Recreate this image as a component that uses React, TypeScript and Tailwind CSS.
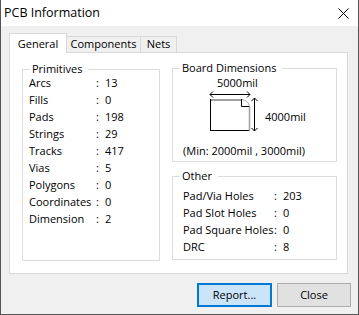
import React from "react";

const primitives: [string, string][] = [
  ["Arcs", "13"],
  ["Fills", "0"],
  ["Pads", "198"],
  ["Strings", "29"],
  ["Tracks", "417"],
  ["Vias", "5"],
  ["Polygons", "0"],
  ["Coordinates", "0"],
  ["Dimension", "2"],
];

const other: [string, string][] = [
  ["Pad/Via Holes", "203"],
  ["Pad Slot Holes", "0"],
  ["Pad Square Holes", "0"],
  ["DRC", "8"],
];

// Windows style group box with caption sitting on the top border
const GroupBox = ({ title, className, children }: { title: string; className: string; children: React.ReactNode }) => (
  <div className={`relative border border-[#dcdcdc] ${className}`}>
    <span className="absolute top-[-9px] left-[7px] bg-white pl-[2px] pr-[6px] leading-[16px]">{title}</span>
    {children}
  </div>
);

const Row = ({ label, value, labelWidth }: { label: string; value: string; labelWidth: string }) => (
  <div className="flex h-[17px] items-center whitespace-nowrap">
    <span className={labelWidth}>{label}</span>
    <span className="w-[10px] pl-[1px]">:</span>
    <span>{value}</span>
  </div>
);

const BoardDrawing = () => (
  <svg width="50" height="43" viewBox="0 0 50 43" fill="none" className="ml-[25px] shrink-0">
    {/* width arrow */}
    <line x1="2" y1="3.5" x2="42" y2="3.5" stroke="#000" />
    <polyline points="5,0.5 2,3.5 5,6.5" stroke="#000" />
    <polyline points="39,0.5 42,3.5 39,6.5" stroke="#000" />
    {/* page */}
    <line x1="2" y1="9" x2="33.5" y2="9" stroke="#a0a0a0" strokeWidth="2" />
    <line x1="2.5" y1="8" x2="2.5" y2="40" stroke="#000" />
    <line x1="2" y1="39.5" x2="41" y2="39.5" stroke="#000" />
    <line x1="41.5" y1="15.5" x2="41.5" y2="40" stroke="#a0a0a0" strokeWidth="1.5" />
    <polyline points="33.5,8 33.5,15.5 41.5,15.5" stroke="#000" />
    <path d="M34 8.5 Q40.5 9.5 41.5 15.5" stroke="#b0b0b0" />
    {/* height arrow */}
    <line x1="46.5" y1="7" x2="46.5" y2="40" stroke="#000" />
    <polyline points="43.5,10 46.5,7 49.5,10" stroke="#000" />
    <polyline points="43.5,37 46.5,40 49.5,37" stroke="#000" />
  </svg>
);

export default function App() {
  return (
    <div className="w-[359px] h-[315px] flex flex-col bg-[#f0f0f0] border-x border-b border-[#555555] text-[11px] text-black font-['Open_Sans','Segoe_UI',sans-serif]">
      <div className="h-[26px] shrink-0 bg-white flex items-center justify-between pl-[3px] pr-[9px]">
        <span className="text-[12.5px]">PCB Information</span>
        <svg width="11" height="11" viewBox="0 0 11 11" stroke="#000" strokeWidth="1">
          <line x1="0.5" y1="0.5" x2="10.5" y2="10.5" />
          <line x1="10.5" y1="0.5" x2="0.5" y2="10.5" />
        </svg>
      </div>

      <div className="flex h-[19px] items-end mt-[7px] ml-[8px]">
        <div className="relative z-10 -mb-px h-[20px] w-[58px] flex items-center justify-center pt-[2px] bg-white border-x border-t border-[#d9d9d9]">
          General
        </div>
        <div className="h-[16px] w-[74px] flex items-center justify-center border-r border-t border-[#d9d9d9]">
          Components
        </div>
        <div className="h-[16px] w-[36px] flex items-center justify-center border-r border-t border-[#d9d9d9]">
          Nets
        </div>
      </div>

      <div className="ml-[8px] w-[339px] h-[222px] bg-white border border-[#d9d9d9] flex pl-[12px] pt-[15px]">
        <GroupBox title="Primitives" className="mt-px w-[138px] h-[192px] pl-[6px] pt-[5px]">
          {primitives.map(([l, v]) => (
            <Row key={l} label={l} value={v} labelWidth="w-[66px]" />
          ))}
        </GroupBox>

        <div className="ml-[12px] w-[165px] flex flex-col">
          <GroupBox title="Board Dimensions" className="h-[94px] pl-[10px] pt-[6px]">
            <div className="leading-[16px] ml-[34px]">5000mil</div>
            <div className="flex">
              <BoardDrawing />
              <span className="ml-[7px] mt-[18px] leading-[16px]">4000mil</span>
            </div>
            <div className="leading-[16px] mt-[9px] whitespace-nowrap">(Min: 2000mil , 3000mil)</div>
          </GroupBox>
          <GroupBox title="Other" className="mt-[14px] h-[84px] pl-[10px] pt-[11px]">
            {other.map(([l, v]) => (
              <Row key={l} label={l} value={v} labelWidth="w-[90px]" />
            ))}
          </GroupBox>
        </div>
      </div>

      <div className="flex justify-end gap-[5px] mt-[9px] pr-[7px]">
        <button className="w-[75px] h-[24px] border-2 border-[#0078d7] bg-[#cce4f7]">Report...</button>
        <button className="w-[74px] h-[24px] border border-[#adadad] bg-[#e1e1e1]">Close</button>
      </div>
    </div>
  );
}
